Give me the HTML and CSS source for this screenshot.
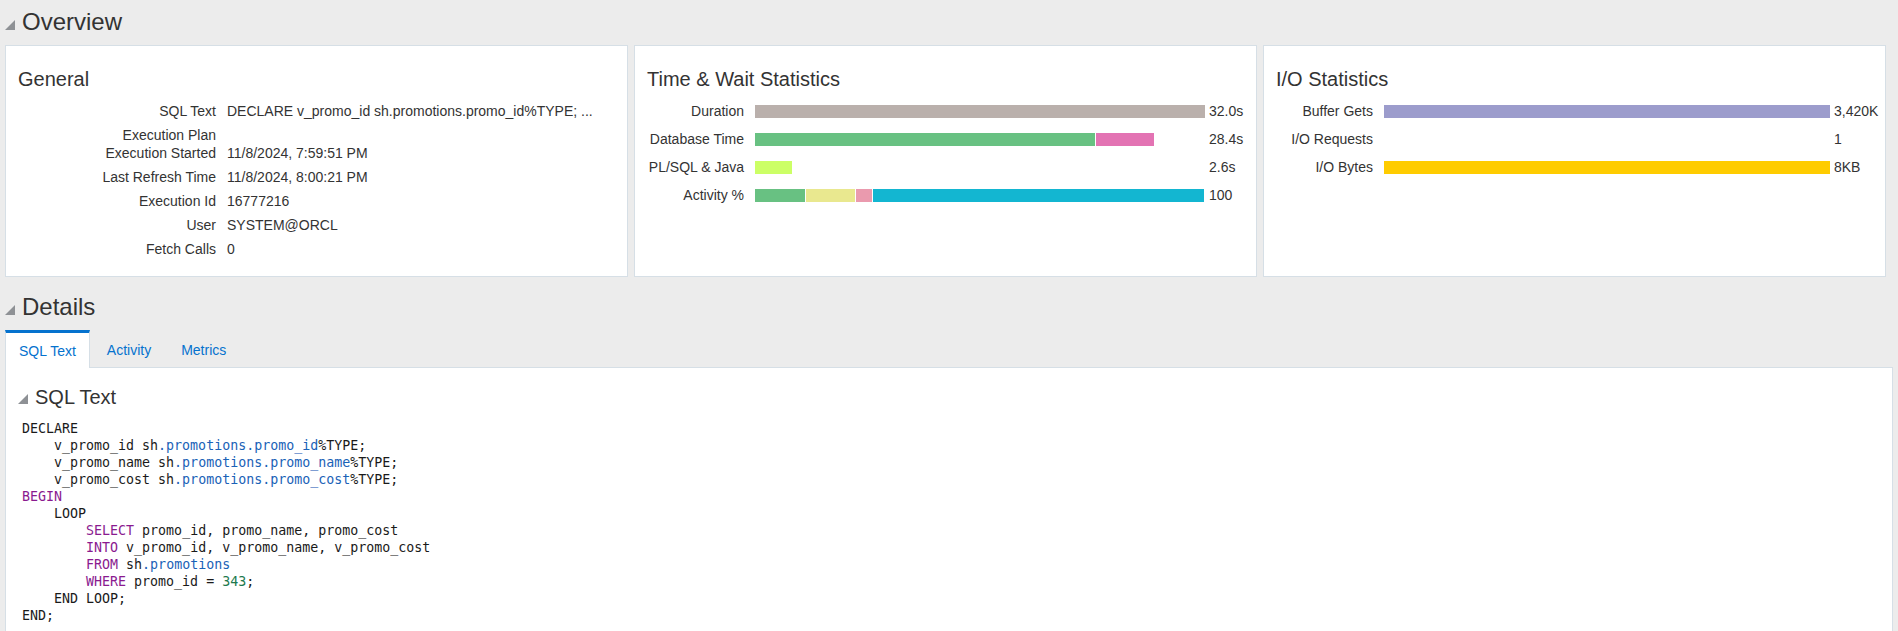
FILE: index.html
```html
<!DOCTYPE html>
<html lang="en">
<head>
<meta charset="utf-8">
<title>SQL Monitor - Overview</title>
<link rel="stylesheet" href="styles.css">
</head>
<body>
<div class="page">
  <h2 class="section-head"><svg class="twisty" viewBox="0 0 10 10"><polygon points="10,0 10,10 0,10"/></svg>Overview</h2>
  <div class="cards">
    <div class="card">
      <h3 class="card-title">General</h3>
      <div class="kv-list">
        <div class="kv"><span class="kv-label">SQL Text</span><span class="kv-value">DECLARE v_promo_id sh.promotions.promo_id%TYPE; ...</span></div>
        <div class="kv kv-short"><span class="kv-label">Execution Plan</span><span class="kv-value"></span></div>
        <div class="kv"><span class="kv-label">Execution Started</span><span class="kv-value">11/8/2024, 7:59:51 PM</span></div>
        <div class="kv"><span class="kv-label">Last Refresh Time</span><span class="kv-value">11/8/2024, 8:00:21 PM</span></div>
        <div class="kv"><span class="kv-label">Execution Id</span><span class="kv-value">16777216</span></div>
        <div class="kv"><span class="kv-label">User</span><span class="kv-value">SYSTEM@ORCL</span></div>
        <div class="kv"><span class="kv-label">Fetch Calls</span><span class="kv-value">0</span></div>
      </div>
    </div>
    <div class="card">
      <h3 class="card-title">Time &amp; Wait Statistics</h3>
      <div class="stats stats-time">
        <div class="stat-row"><span class="stat-label">Duration</span><span class="stat-track"><span class="seg c-duration" style="width:450px"></span></span><span class="stat-value">32.0s</span></div>
        <div class="stat-row"><span class="stat-label">Database Time</span><span class="stat-track"><span class="seg c-green" style="width:340px"></span><span class="seg c-pink" style="width:58px"></span></span><span class="stat-value">28.4s</span></div>
        <div class="stat-row"><span class="stat-label">PL/SQL &amp; Java</span><span class="stat-track"><span class="seg c-lime" style="width:37px"></span></span><span class="stat-value">2.6s</span></div>
        <div class="stat-row"><span class="stat-label">Activity %</span><span class="stat-track"><span class="seg c-green" style="width:50px"></span><span class="seg c-yellow" style="width:49px"></span><span class="seg c-rose" style="width:16px"></span><span class="seg c-cyan" style="width:331px"></span></span><span class="stat-value">100</span></div>
      </div>
    </div>
    <div class="card">
      <h3 class="card-title">I/O Statistics</h3>
      <div class="stats stats-io">
        <div class="stat-row"><span class="stat-label">Buffer Gets</span><span class="stat-track"><span class="seg c-purple" style="width:446px"></span></span><span class="stat-value">3,420K</span></div>
        <div class="stat-row"><span class="stat-label">I/O Requests</span><span class="stat-track"></span><span class="stat-value">1</span></div>
        <div class="stat-row"><span class="stat-label">I/O Bytes</span><span class="stat-track"><span class="seg c-gold" style="width:446px"></span></span><span class="stat-value">8KB</span></div>
      </div>
    </div>
  </div>

  <div class="details">
    <h2 class="section-head"><svg class="twisty" viewBox="0 0 10 10"><polygon points="10,0 10,10 0,10"/></svg>Details</h2>
    <div class="tabs">
      <span class="tab tab-active">SQL Text</span>
      <span class="tab">Activity</span>
      <span class="tab">Metrics</span>
    </div>
    <div class="panel">
      <h3 class="sub-head"><svg class="twisty" viewBox="0 0 10 10"><polygon points="10,0 10,10 0,10"/></svg>SQL Text</h3>
<pre class="code">DECLARE
    v_promo_id sh<span class="t-obj">.promotions.promo_id</span>%TYPE;
    v_promo_name sh<span class="t-obj">.promotions.promo_name</span>%TYPE;
    v_promo_cost sh<span class="t-obj">.promotions.promo_cost</span>%TYPE;
<span class="t-kw">BEGIN</span>
    LOOP
        <span class="t-kw">SELECT</span> promo_id, promo_name, promo_cost
        <span class="t-kw">INTO</span> v_promo_id, v_promo_name, v_promo_cost
        <span class="t-kw">FROM</span> sh<span class="t-obj">.promotions</span>
        <span class="t-kw">WHERE</span> promo_id = <span class="t-num">343</span>;
    END LOOP;
END;</pre>
    </div>
  </div>
</div>
</body>
</html>
```
FILE: styles.css
```css
* { box-sizing: border-box; }
html, body { margin: 0; padding: 0; }
body {
  background: #ececec;
  font-family: "Liberation Sans", Arial, Helvetica, sans-serif;
  font-size: 14px;
  color: #333;
}
.page { padding: 8px 5px 0 5px; }

.section-head {
  display: flex;
  align-items: baseline;
  height: 28px;
  line-height: 28px;
  font-size: 24px;
  font-weight: normal;
  color: #333;
  margin: 0 0 9px 0;
}
.twisty { width: 10px; height: 10px; margin-right: 7px; flex: none; fill: #8e9195; }

.cards {
  display: grid;
  grid-template-columns: repeat(3, minmax(0, 1fr));
  column-gap: 6px;
  margin-right: 7px;
}
.card {
  min-width: 0;
  background: #fff;
  border: 1px solid #d6dfe6;
  padding: 21px 12px 15px 12px;
}
.card-title {
  margin: 0;
  font-size: 20px;
  line-height: 24px;
  font-weight: normal;
  color: #333;
}

.kv-list { margin-top: 8px; }
.kv { display: flex; line-height: 24px; height: 24px; }
.kv-short { height: 18px; }
.kv-label { width: 198px; flex: none; text-align: right; }
.kv-value { margin-left: 11px; white-space: nowrap; }

.stats { margin-top: 6px; }
.stat-row { display: flex; align-items: center; height: 28px; }
.stat-label { width: 97px; flex: none; text-align: right; white-space: nowrap; }
.stat-track {
  display: flex;
  gap: 1px;
  height: 13px;
  width: 450px;
  flex: none;
  margin: 0 4px 0 11px;
}
.stats-io .stat-track { width: 446px; }
.seg { display: block; height: 100%; flex: none; }
.stat-value { white-space: nowrap; }

.c-duration { background: #bab0ac; }
.c-green { background: #68c182; }
.c-pink { background: #e373b3; }
.c-lime { background: #ccff66; }
.c-yellow { background: #e9e88f; }
.c-rose { background: #ea9aae; }
.c-cyan { background: #13b6d1; }
.c-purple { background: #9c9ccc; }
.c-gold { background: #ffcc00; }

.details { margin-top: 16px; }
.tabs {
  display: flex;
  height: 38px;
  border-bottom: 1px solid #d6dfe6;
}
.tab {
  display: flex;
  align-items: center;
  padding: 0 15px;
  color: #0572ce;
  border-top: 3px solid transparent;
}
.tab-active {
  padding: 0 13px 0 13px;
  margin-right: 2px;
  height: 38px;
  border-top: 3px solid #0572ce;
  border-left: 1px solid #d6dfe6;
  border-right: 1px solid #d6dfe6;
  background: #fff;
}
.panel {
  background: #fff;
  border: 1px solid #d6dfe6;
  border-top: none;
  padding: 17px 16px 40px 16px;
}
.sub-head {
  display: flex;
  align-items: baseline;
  margin: 0 0 11px -4px;
  font-size: 20px;
  line-height: 24px;
  font-weight: normal;
  color: #333;
}
.code {
  margin: 0;
  font-family: "DejaVu Sans Mono", "Liberation Mono", monospace;
  font-size: 13.3px;
  line-height: 17px;
  color: #1a1a1a;
}
.t-kw { color: #8a1a8f; }
.t-obj { color: #1a62b7; }
.t-num { color: #1d7a4e; }
```
